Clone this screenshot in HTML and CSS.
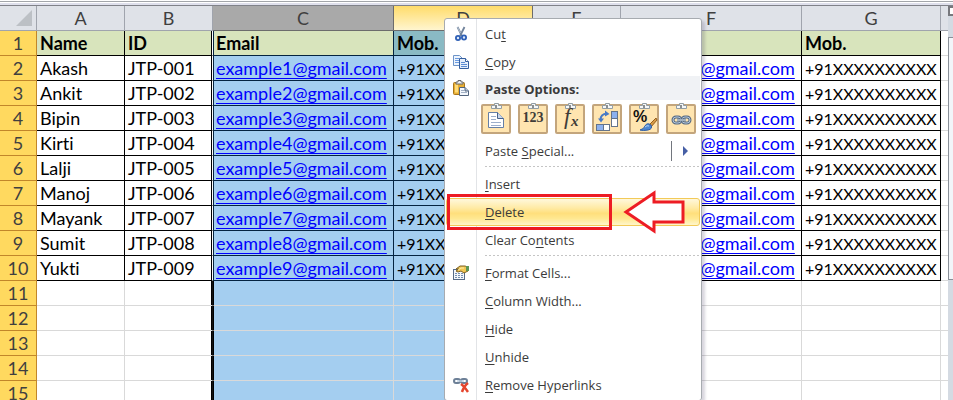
FILE: index.html
```html
<!DOCTYPE html>
<html lang="en">
<head>
<meta charset="utf-8">
<title>Worksheet</title>
<link rel="stylesheet" href="styles.css">
</head>
<body>
<main class="workbook">
  <div class="formula-edge"></div>
  <div class="sheet-area">
    <table class="sheet">
      <colgroup>
        <col class="w-row"><col class="w-narrow"><col class="w-narrow"><col class="w-email"><col class="w-phone"><col class="w-narrow"><col class="w-email"><col class="w-phone"><col>
      </colgroup>
      <thead>
        <tr>
          <th class="corner"><svg width="16" height="16" viewBox="0 0 16 16"><path d="M16 0V16H0Z" fill="#bcc0c5"/></svg></th>
          <th>A</th><th>B</th><th class="picked">C</th><th class="hover">D</th><th>E</th><th>F</th><th>G</th><th></th>
        </tr>
      </thead>
      <tbody id="rows"></tbody>
    </table>
    <div class="scrollbar"><div class="scroll-split"></div><div class="scroll-thumb"></div></div>
  </div>

  <div class="menu" role="menu">
    <button class="item" role="menuitem"><span class="icon"><svg width="16" height="16" viewBox="0 0 16 16"><path d="M4.500 1 9 10M11.500 1 7 10" stroke="#71839b" stroke-width="1.800" fill="none"/><path d="M4.500 1 7.500 7" stroke="#b5c2d1" fill="none"/><circle cx="5" cy="12" r="2.100" fill="#dce8f8" stroke="#2e5fb5" stroke-width="1.800"/><circle cx="11" cy="11.500" r="2.100" fill="#dce8f8" stroke="#2e5fb5" stroke-width="1.800"/></svg></span><span class="label">Cu<u>t</u></span></button>
    <button class="item" role="menuitem"><span class="icon"><svg width="16" height="16" viewBox="0 0 16 16"><path d="M.500 1.500h6l3 3v7h-9z" fill="#edf4fd" stroke="#6d94c8"/><path d="M2 4.500h4M2 6.500h4M2 8.500h4" stroke="#6b9be0"/><path d="M6.500 4.500h6l3 3v7h-9z" fill="#e6effb" stroke="#355f9f"/><path d="M12.500 4.500v3h3" fill="#fff" stroke="#355f9f"/><path d="M8 8.500h4M8 10.500h6M8 12.500h6" stroke="#5c8cd3"/></svg></span><span class="label"><u>C</u>opy</span></button>
    <div class="section"><span class="icon"><svg width="16" height="16" viewBox="0 0 16 16"><rect x=".5" y="2.500" width="11" height="12" rx="1" fill="#e7ae35" stroke="#a8761b"/><path d="M2 4.500h3v8H2z" fill="#ffdc78"/><path d="M3 4V2h2V.500h3V2h2v2z" fill="#eef1f5" stroke="#686868"/><path d="M6.500 7.500h5.500l3.500 3.500v4.500h-9z" fill="#f4f8fd" stroke="#52657e"/><path d="M12 7.500V11h3.500" fill="#b9c9df" stroke="#52657e"/><path d="M8 10.500h3M8 12.500h6" stroke="#a2b1c5"/></svg></span><span class="section-label">Paste Options:</span></div>
    <div class="paste-row">
      <button class="paste" aria-label="Paste"><svg width="30" height="32" viewBox="0 0 30 32"><use href="#clip"/><path d="M7.500 10.500h9l6 6v9h-15z" fill="#fff" stroke="#657fa5"/><path d="M16.500 10.500v6h6" fill="#c8d6ea" stroke="#46628b"/><path d="M10 14.500h5M10 17.500h5M10 20.500h10M10 23.500h10" stroke="#9dafcb"/></svg></button>
      <button class="paste" aria-label="Values"><svg width="30" height="32" viewBox="0 0 30 32"><use href="#clip"/><text x="15" y="20" text-anchor="middle" class="digits">123</text></svg></button>
      <button class="paste" aria-label="Formulas"><svg width="30" height="32" viewBox="0 0 30 32"><use href="#clip"/><text x="9" y="22" class="fx">f</text><text x="16" y="24" class="fx-small">x</text></svg></button>
      <button class="paste" aria-label="Transpose"><svg width="30" height="32" viewBox="0 0 30 32"><use href="#clip"/><rect x="19.500" y="9.500" width="6" height="15" fill="#fff" stroke="#65748a"/><path d="M20 10h5v6h-5z" fill="#8db1ee"/><path d="M19.500 16.500h6" stroke="#65748a"/><rect x="4.500" y="22.500" width="13" height="6" fill="#fff" stroke="#65748a"/><path d="M5 23h6v5H5z" fill="#8db1ee"/><path d="M11.500 22.500v6" stroke="#65748a"/><path d="M8.500 18Q8.500 12 15 11.500" fill="none" stroke="#4779c6" stroke-width="2"/><path d="M6 16.500h6L9 20.500zM13 8.500v6L17.500 12z" fill="#4779c6"/></svg></button>
      <button class="paste" aria-label="Formatting"><svg width="30" height="32" viewBox="0 0 30 32"><use href="#clip"/><text x="4" y="20" class="percent">%</text><path d="M20 23 27 16l1 2-6 7z" fill="#d69a46" stroke="#956020"/><path d="M11 28q4-1 5-4 2-4 6-1 2 4-3 5t-8 0" fill="#4c86d2" stroke="#2f5ea3"/><path d="M16 25q2-2 4-1" stroke="#b5d4f5" fill="none"/></svg></button>
      <button class="paste" aria-label="Paste Link"><svg width="30" height="32" viewBox="0 0 30 32"><use href="#clip"/><rect x="7" y="15" width="8" height="6" rx="3" fill="none" stroke="#596c83" stroke-width="3"/><rect x="16" y="15" width="8" height="6" rx="3" fill="none" stroke="#596c83" stroke-width="3"/><rect x="7" y="15" width="8" height="6" rx="3" fill="none" stroke="#b4c7dc"/><rect x="16" y="15" width="8" height="6" rx="3" fill="none" stroke="#b4c7dc"/><path d="M11 18h9" stroke="#596c83" stroke-width="3"/><path d="M11 18h9" stroke="#edf5fb"/></svg></button>
    </div>
    <button class="item" role="menuitem"><span class="icon"></span><span class="label">Paste <u>S</u>pecial...</span><span class="submenu"><svg width="5" height="10" viewBox="0 0 5 10"><path d="M0 0 5 5 0 10Z" fill="#465fa5"/></svg></span></button>
    <div class="separator"></div>
    <button class="item" role="menuitem"><span class="icon"></span><span class="label"><u>I</u>nsert</span></button>
    <button class="item active" role="menuitem"><span class="icon"></span><span class="label"><u>D</u>elete</span></button>
    <button class="item" role="menuitem"><span class="icon"></span><span class="label">Clear Co<u>n</u>tents</span></button>
    <div class="separator"></div>
    <button class="item" role="menuitem"><span class="icon"><svg width="16" height="16" viewBox="0 0 16 16"><rect x=".5" y="4.500" width="11" height="10" fill="#f4f7fb" stroke="#566b88"/><path d="M2 8.500h2M5 8.500h2M8 8.500h2M2 10.500h2M5 10.500h2M8 10.500h2M2 12.500h2M5 12.500h2M8 12.500h2" stroke="#738eb0"/><path d="M3 4 7 1h5l3 1v4l-4 2-3-2-3 1-2-1 3-2z" fill="#f0c553" stroke="#7d6123"/><path d="M5 5 8 3h3" stroke="#fff1a8" fill="none"/><path d="M13 1h3v5h-3z" fill="#5d9656"/></svg></span><span class="label"><u>F</u>ormat Cells...</span></button>
    <button class="item" role="menuitem"><span class="icon"></span><span class="label"><u>C</u>olumn Width...</span></button>
    <button class="item" role="menuitem"><span class="icon"></span><span class="label"><u>H</u>ide</span></button>
    <button class="item" role="menuitem"><span class="icon"></span><span class="label"><u>U</u>nhide</span></button>
    <button class="item" role="menuitem"><span class="icon"><svg width="16" height="16" viewBox="0 0 16 16"><rect x="1" y="2" width="6" height="4" rx="2" fill="none" stroke="#6d8097" stroke-width="2"/><rect x="8" y="2" width="6" height="4" rx="2" fill="none" stroke="#6d8097" stroke-width="2"/><path d="M4 4h7" stroke="#c5d5e5" stroke-width="1.500"/><path d="M8 7q3 2 7 8M15 6q-4 3-6 9" stroke="#e5452d" stroke-width="2.500" fill="none"/></svg></span><span class="label"><u>R</u>emove Hyperlinks</span></button>
  </div>
  <div class="callout"></div>
  <svg class="arrow" width="64" height="46" viewBox="0 0 64 46"><path d="M4 23 32 4V13H61V33H32V42Z" fill="#fff" stroke="#ed1c24" stroke-width="3"/></svg>
  <svg class="defs" width="0" height="0"><defs><g id="clip"><rect x="1" y="3" width="28" height="28" rx="1" fill="#ffe5b0" stroke="#c3a57c" stroke-width="2"/><path d="M10.500 6.500v-3h3v-2h4v2h3v3z" fill="#f5f7f8" stroke="#929da3"/><path d="M15 3v3" stroke="#8b8f91" stroke-width="2"/></g></defs></svg>
</main>
<script src="sheet.js"></script>
</body>
</html>
```
FILE: styles.css
```css
* { box-sizing: border-box; }
body { margin: 0; background: #fff; overflow: hidden; }
.workbook { position: relative; height: 100vh; overflow: hidden; }
.formula-edge { height: 6px; background: linear-gradient(#fff 0 1px, #a3a6aa 1px 2px, #fff 2px 3px, #dfe0ec 3px 5px, #808289 5px 6px); }
.sheet-area { display: flex; }
.sheet { flex: 1; min-width: 0; width: 100%; table-layout: fixed; border-collapse: separate; border-spacing: 0; font: 18px/24px Lato, "Liberation Sans", sans-serif; font-variant-ligatures: none; color: #000; }
.w-row { width: 37px; }
.w-narrow { width: 88px; }
.w-email { width: 181px; }
.w-phone { width: 139px; }
th, td { height: 25px; padding: 0; white-space: nowrap; overflow: hidden; }
thead th { background: #dfe2e8; border-right: 1px solid #a0a4ad; border-bottom: 1px solid #a0a4ad; font-weight: 400; color: #3f3f3f; }
thead th:last-child { border-right: 0; }
thead .picked { background: #a9a9a9; border-color: #6c6c6c; }
thead .hover { background: linear-gradient(#ffdc6a, #fff5cf); border-color: #6c6c6c; }
.corner svg { display: block; margin: 0 4px 0 auto; }
tbody th { background: #ffd95f; border-right: 1px solid #c1862a; border-bottom: 1px solid #c1862a; font-weight: 400; color: #3f3f3f; }
td { padding-left: 3px; border-right: 1px solid #d9d9d9; border-bottom: 1px solid #d9d9d9; }
td:last-child { border-right: 0; }
.filled { border-color: #000; }
.title { background: #d8e4bc; font-weight: 700; }
.selected { background: #a4cef0; }
.selected.filled { border-color: #042340; }
.title.first { background: #d8e4bc; }
.title.second { background: #8abac4; }
.edge { border-right-color: #fff; box-shadow: inset -1px 0 #000; }
.edge.blank { border-right-color: #111; }
.first { border-left: 1px solid #000; padding-left: 2px; }
.phone { font-size: 16px; line-height: 20px; }
td a { color: #00f; text-decoration: underline; text-decoration-thickness: 1px; text-underline-offset: 3px; }
.scrollbar { width: 5px; display: flex; flex-direction: column; background: #d4dae2; }
.scroll-split { height: 10px; border: 2px solid #77787d; border-right: 0; background: #fff; }
.scroll-thumb { height: 243px; margin-top: 21px; border: 1px solid #8a9099; border-right: 0; background: #f2f5f9; }
.menu { position: absolute; left: 444px; top: 18px; width: 258px; padding: 1px; border: 1px solid #a7abb0; border-radius: 3px; background: linear-gradient(90deg, #fff 31px, #e2e4e7 31px 32px, #fff 32px); box-shadow: 3px 3px 3px rgba(60, 50, 90, .2); font: 13px/20px "Open Sans", "Noto Sans", sans-serif; color: #3b3b3b; }
.item { display: flex; align-items: center; width: 100%; height: 28px; padding: 0; border: 1px solid transparent; border-radius: 3px; background: none; font: inherit; color: inherit; text-align: left; }
.icon { flex: none; display: flex; width: 38px; padding-left: 6px; }
.item u { text-underline-offset: 2px; }
.active { border-color: #f2ca58; background: linear-gradient(#fff8dc, #ffeaa4 35%, #ffdf7c 55%, #ffe891 75%, #fff6cb); }
.section { display: flex; align-items: center; height: 24px; padding-left: 1px; }
.section .icon { width: 31px; }
.section-label { flex: 1; height: 24px; padding-left: 7px; line-height: 26px; background: #f0f2f5; font-weight: 700; }
.paste-row { display: flex; gap: 7px; height: 37px; padding: 2px 0 0 35px; }
.paste { flex: none; width: 30px; height: 32px; padding: 0; border: 0; background: none; }
.paste svg { display: block; }
.digits { font: bold 14px "Liberation Serif", serif; fill: #403c38; }
.fx { font: italic 23px "Liberation Serif", serif; fill: #403c38; }
.fx-small { font: italic bold 15px "Liberation Serif", serif; fill: #403c38; }
.percent { font: bold 16px "Liberation Sans", sans-serif; fill: #111; }
.submenu { display: flex; align-items: center; height: 20px; margin-left: auto; padding: 0 11px; border-left: 1px solid #72767e; }
.separator { height: 5px; margin-left: 39px; background: repeating-linear-gradient(90deg, #c5c5c5 0 2px, transparent 2px 4px) 0 1px / 100% 1px no-repeat; }
.callout { position: absolute; left: 447px; top: 194px; width: 165px; height: 36px; border: 3px solid #ed1c24; pointer-events: none; }
.arrow { position: absolute; left: 622px; top: 189px; pointer-events: none; }
.defs { position: absolute; }
```
FILE: sheet.js
```javascript
const names = ["Akash", "Ankit", "Bipin", "Kirti", "Lalji", "Manoj", "Mayank", "Sumit", "Yukti"];
const phone = '<span class="phone">+91XXXXXXXXXX</span>';
const classes = ["", "edge", "selected first", "selected second", "", "", "", "rest"];

function rowCells(n) {
  if (n === 1) return ["Name", "ID", "Email", "Mob.", "", "", "Mob.", ""];
  if (n > 10) return ["", "", "", "", "", "", "", ""];
  const i = n - 1;
  const mail = `<a href="mailto:example${i}@gmail.com">example${i}@gmail.com</a>`;
  return [names[i - 1], `JTP-00${i}`, mail, phone, "", mail, phone, ""];
}

let html = "";
for (let n = 1; n <= 15; n++) {
  const cells = rowCells(n).map((value, c) => {
    const kind = c === 7 ? "" : n > 10 ? "blank" : n === 1 ? "filled title" : "filled";
    return `<td class="${classes[c]} ${kind}">${value}</td>`;
  });
  html += `<tr><th scope="row">${n}</th>${cells.join("")}</tr>`;
}
document.getElementById("rows").innerHTML = html;
```
